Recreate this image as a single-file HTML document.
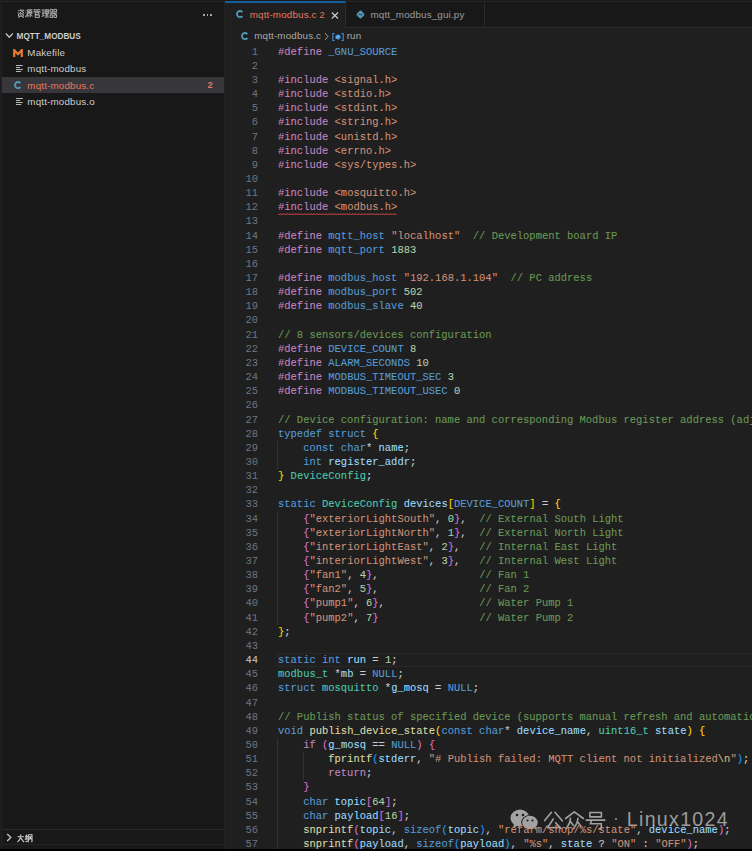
<!DOCTYPE html>
<html><head><meta charset="utf-8">
<style>
*{margin:0;padding:0;box-sizing:border-box}
html,body{width:752px;height:851px;overflow:hidden;background:#1b1b1b}
body{position:relative;font-family:"Liberation Sans",sans-serif}
.abs{position:absolute}
#topb{left:0;top:1px;width:752px;height:1px;background:#242424}
#leftb{left:1px;top:1px;width:1px;height:848px;background:#232323}
#side{left:2px;top:2px;width:222px;height:847px;background:#181818}
#ed{left:225px;top:28px;width:527px;height:821px;background:#1f1f1f}
#sideR{left:224px;top:2px;width:1px;height:847px;background:#222222}
.ui{position:absolute;color:#cccccc;font-size:10px;white-space:pre;line-height:16px;letter-spacing:0.17px}
#tabs{left:225px;top:2px;width:527px;height:26px;background:#181818;border-bottom:1px solid #2b2b2b}
#tab1{left:225px;top:1px;width:121px;height:27px;background:#1f1f1f;border-top:2px solid #145f9c;border-right:1px solid #2b2b2b}
#tab2r{left:484px;top:2px;width:1px;height:25px;background:#2b2b2b}
#code{left:225px;top:0;width:527px;height:851px;overflow:hidden}
.ln{position:absolute;left:0;width:33px;transform:scaleY(1.06);transform-origin:0 9.9px;text-align:right;color:#6e7681;font-family:"Liberation Mono",monospace;font-size:10.47px;line-height:14.15px;white-space:pre}
.ln.act{color:#cccccc}
.cl{position:absolute;left:53px;color:#cccccc;-webkit-text-stroke:0.08px currentColor;transform:scaleY(1.08);transform-origin:0 9.9px;font-family:"Liberation Mono",monospace;font-size:10.47px;line-height:14.15px;white-space:pre}
.k{color:#569cd6}.p{color:#c586c0}.s{color:#ce9178}.n{color:#b5cea8}.c{color:#6a9955}.t{color:#4ec9b0}.v{color:#9cdcfe}.f{color:#dcdcaa}.b1{color:#ffd700}.b2{color:#da70d6}.b3{color:#179fff}.e{color:#d7ba7d}
#bottom{left:0;top:849px;width:752px;height:2px;background:#000}
</style></head><body>
<div class="abs" id="side"></div>
<div class="abs" id="ed"></div>
<div class="abs" id="topb"></div>
<div class="abs" id="leftb"></div>
<div class="abs" id="sideR"></div>
<div class="abs" id="tabs"></div>
<div class="abs" id="tab1"></div>
<div class="abs" id="tab2r"></div>

<svg class="abs" style="left:16.60px;top:9.40px;overflow:visible" width="42.7" height="10.6" viewBox="0 0 44.48 11.08"><g fill="none" stroke="#bdbdbd" stroke-width="0.95"><path transform="translate(0.00 0)" d="M0.8 1L1.6 1.8M0.6 4L1.8 3M3.5 0.4L2.8 2M3 1.3H7.2L6.6 2.4M5 1.5L3.2 4.2M5 2.5L7.4 4.2M1.5 5H6.5V7.5H1.5ZM4 5.5V7M3 7.6L1 9M5 7.6L7.2 9"/><path transform="translate(8.48 0)" d="M0.6 1L1.4 1.8M0.4 3.5L1.4 4.2M0.4 8.5L1.6 5.8M2.6 0.8H7.6M2.6 0.8V5L2 8.6M3.6 2.2H7V5.2H3.6ZM3.6 3.7H7M5.3 5.2V8.4L4.6 8.6M4 6.3L3.2 7.8M6.6 6.3L7.4 7.8M5.3 0.8L5 2.2"/><path transform="translate(16.96 0)" d="M1.5 0L0.5 1.6M1.2 0.8H3.4M5 0L4 1.6M4.7 0.8H7.4M4 1.6V2.2M0.8 3.6V2.4H7.2V3.6M2 3.5V9M2 3.5H6V5.5H2M2 6.3H6.4V8.8H2"/><path transform="translate(25.44 0)" d="M0.4 1H3M0.4 4.4H3M1.7 1V7.4M0.2 7.8L3.2 6.8M3.8 0.8H7.6V5H3.8ZM3.8 2.9H7.6M5.7 0.8V8.3M4 6.4H7.4M3.4 8.4H7.8"/><path transform="translate(33.92 0)" d="M0.6 0.4H3.4V3H0.6ZM4.6 0.4H7.4V3H4.6ZM0.2 4.4H7.8M4 3.2L1 6M4 4.4L7.4 6M6.6 3.2L7 3.6M0.6 6.2H3.4V8.8H0.6ZM4.6 6.2H7.4V8.8H4.6Z"/></g></svg>
<div class="abs" style="left:203px;top:14.2px;width:1.5px;height:1.5px;background:#a8a8a8"></div>
<div class="abs" style="left:206.7px;top:14.2px;width:1.5px;height:1.5px;background:#a8a8a8"></div>
<div class="abs" style="left:210.4px;top:14.2px;width:1.5px;height:1.5px;background:#a8a8a8"></div>
<svg class="abs" style="left:5px;top:32px" width="9" height="7" viewBox="0 0 9 7"><path d="M0.8 1.5 L4.3 5.2 L7.8 1.5" fill="none" stroke="#c5c5c5" stroke-width="1.3"/></svg>
<div class="ui" style="left:16.6px;top:28.7px;font-size:8.2px;font-weight:bold;color:#cccccc;letter-spacing:0">MQTT_MODBUS</div>
<svg class="abs" style="left:13.3px;top:48.6px" width="10" height="8" viewBox="0 0 10 8"><path d="M1.2 8V1L5 5.2L8.8 1V8" fill="none" stroke="#e37933" stroke-width="2.2" stroke-linejoin="miter"/></svg>
<div class="ui" style="left:27.3px;top:44.8px;font-size:9.8px">Makefile</div>
<svg class="abs" style="left:15.8px;top:65px" width="8" height="8" viewBox="0 0 8 8"><path d="M0 0.5h6.8M0 2.5h4.2M0 4.5h6.8M0 6.5h5.2" stroke="#b8b8b8" stroke-width="1"/></svg>
<div class="ui" style="left:27.3px;top:61.2px;font-size:9.8px">mqtt-modbus</div>
<div class="abs" style="left:2px;top:77.2px;width:222px;height:15.6px;background:#36363b"></div>
<svg class="abs" style="left:14.2px;top:81px" width="8" height="9" viewBox="0 0 8 9"><path d="M6.4 2.1A3.1 3.1 0 1 0 6.4 6.1" fill="none" stroke="#519aba" stroke-width="1.8"/></svg>
<div class="ui" style="left:27.3px;top:77.6px;font-size:9.8px;color:#e8775f">mqtt-modbus.c</div>
<div class="ui" style="left:207.6px;top:77.3px;font-size:9.2px;font-weight:bold;color:#e8775f">2</div>
<svg class="abs" style="left:15.8px;top:98px" width="8" height="8" viewBox="0 0 8 8"><path d="M0 0.5h6.8M0 2.5h4.2M0 4.5h6.8M0 6.5h5.2" stroke="#b8b8b8" stroke-width="1"/></svg>
<div class="ui" style="left:27.3px;top:94.2px;font-size:9.8px">mqtt-modbus.o</div>
<div class="abs" style="left:2px;top:829px;width:222px;height:1px;background:#2b2b2b"></div>
<svg class="abs" style="left:6px;top:833px" width="6" height="9" viewBox="0 0 6 9"><path d="M1.2 1 L4.8 4.5 L1.2 8" fill="none" stroke="#c5c5c5" stroke-width="1.3"/></svg>
<svg class="abs" style="left:16.70px;top:833.80px;overflow:visible" width="18.0" height="10.3" viewBox="0 0 19.57 11.17"><g fill="none" stroke="#cccccc" stroke-width="1.20"><path transform="translate(0.00 0)" d="M0.5 3H7.5M4 0.5V3Q3.5 6.5 0.5 8.8M4.2 4.5L7.5 8.8"/><path transform="translate(8.70 0)" d="M2 0.5L0.6 3L2.6 3.2M2.6 2.2L0.6 5.6L3 5.2M0.4 8.4L3 7.6M3.6 0.8V9M3.6 0.8H7.6V8.2L7 8.8M4.6 2.6L6.8 6M6.6 2.6L4.6 6"/></g></svg>
<div class="abs" style="left:2px;top:844px;width:222px;height:1px;background:#242424"></div>
<svg class="abs" style="left:236.3px;top:10.1px" width="8" height="9" viewBox="0 0 8 9"><path d="M6.4 2.1A3.1 3.1 0 1 0 6.4 6.1" fill="none" stroke="#519aba" stroke-width="1.8"/></svg>
<div class="ui" style="left:249.7px;top:7px;font-size:9.8px;color:#e8775f">mqtt-modbus.c</div><div class="ui" style="left:319.5px;top:7px;font-size:9.3px;color:#e8775f">2</div>
<svg class="abs" style="left:331px;top:12px" width="8" height="7" viewBox="0 0 8 7"><path d="M0.8 0.5 L7 6.5 M7 0.5 L0.8 6.5" stroke="#d0d0d0" stroke-width="1.1"/></svg>
<svg class="abs" style="left:356.2px;top:9.6px" width="9" height="9" viewBox="0 0 9 9"><g transform="rotate(45 4.5 4.5)"><rect x="1.3" y="1.3" width="6.4" height="6.4" rx="1.8" fill="#519aba"/></g><path d="M2.6 4.6Q3.6 3.6 4.5 4.5Q5.4 5.4 6.4 4.4" fill="none" stroke="#181818" stroke-width="0.9"/></svg>
<div class="ui" style="left:370.5px;top:7px;font-size:9.8px;color:#9d9d9d">mqtt_modbus_gui.py</div>
<svg class="abs" style="left:240.6px;top:31.8px" width="8" height="9" viewBox="0 0 8 9"><path d="M6.4 2.1A3.1 3.1 0 1 0 6.4 6.1" fill="none" stroke="#519aba" stroke-width="1.8"/></svg>
<div class="ui" style="left:254.2px;top:28px;font-size:9.8px;color:#a9a9a9">mqtt-modbus.c</div>
<svg class="abs" style="left:324px;top:32px" width="5" height="9" viewBox="0 0 5 9"><path d="M1 1 L4 4.5 L1 8" fill="none" stroke="#9a9a9a" stroke-width="1"/></svg>
<svg class="abs" style="left:332px;top:32.5px" width="12" height="8" viewBox="0 0 12 8"><path d="M2.6 0.5H0.8V7.5H2.6M9.4 0.5H11.2V7.5H9.4" fill="none" stroke="#3f8fd8" stroke-width="1.1"/><path d="M6 1.3L8.6 2.7V5.4L6 6.8L3.4 5.4V2.7Z" fill="#3f8fd8"/><path d="M4.2 4.6L7.6 3.0" stroke="#9fd0ff" stroke-width="0.9"/></svg>
<div class="ui" style="left:346.7px;top:28px;font-size:9.8px;color:#a9a9a9">run</div>

<svg class="abs" style="left:508px;top:807px" width="32" height="24" viewBox="0 0 32 24">
<ellipse cx="12" cy="11" rx="9.5" ry="8.6" fill="#a3a3a3"/>
<path d="M6 17 L5 21 L10 18.5Z" fill="#a3a3a3"/>
<ellipse cx="22" cy="15.5" rx="8.8" ry="7.6" fill="#1f1f1f"/>
<ellipse cx="22" cy="15.5" rx="7.8" ry="6.8" fill="#a3a3a3"/>
<path d="M26 21 L28.5 23.5 L27.5 20Z" fill="#a3a3a3"/>
<circle cx="9" cy="8" r="1.3" fill="#1f1f1f"/><circle cx="15" cy="8" r="1.3" fill="#1f1f1f"/>
<circle cx="19.5" cy="13.5" r="1.1" fill="#1f1f1f"/><circle cx="24.5" cy="13.5" r="1.1" fill="#1f1f1f"/>
</svg>
<svg class="abs" style="left:540px;top:805px" width="70" height="28" viewBox="0 0 70 28"><path d="M11.4 7.3L4.7 15.6M14.9 7.3L22.3 15.8M13.2 14.0L7.6 22.8L20.2 22.2M15.7 17.9L20.9 23.4M25.6 13.5L34.3 6.8L43.4 13.5M30.5 13.2L29.5 18.0L26.5 23.4M30.5 16.4L33.2 20.3M38.0 13.2L37.0 18.0L33.5 23.8M38.3 17.4L40.9 21.5M49.9 7.5L61.4 7.5L61.4 11.9L49.9 11.9ZM46.2 15.1L64.9 15.1M51.3 15.8L50.4 18.8L61.4 18.8L61.2 23.4L59.0 24.1" fill="none" stroke="#a2a2a2" stroke-width="1.6" stroke-linecap="round" stroke-linejoin="round"/></svg><div class="abs" style="left:614.5px;top:817.5px;width:2.2px;height:2.2px;border-radius:1px;background:#9c9c9c"></div><div class="ui" style="left:626.8px;top:806px;font-size:19.6px;line-height:26px;color:#9c9c9c;letter-spacing:1.3px">Linux1024</div>
<div class="abs" id="code">
<div class="abs" style="left:52.40px;top:440.80px;width:1px;height:28.30px;background:#313131"></div>
<div class="abs" style="left:52.40px;top:511.55px;width:1px;height:113.20px;background:#313131"></div>
<div class="abs" style="left:52.40px;top:737.95px;width:1px;height:113.20px;background:#313131"></div>
<div class="abs" style="left:77.53px;top:752.10px;width:1px;height:28.30px;background:#313131"></div>
<div class="abs" style="left:53.00px;top:653.05px;width:600px;height:14.15px;border:1px solid #282828;border-right:none"></div>
<div class="ln" style="top:44.60px">1</div>
<div class="cl" style="top:44.60px"><span class="p">#define</span> <span class="k">_GNU_SOURCE</span></div>
<div class="ln" style="top:58.75px">2</div>
<div class="ln" style="top:72.90px">3</div>
<div class="cl" style="top:72.90px"><span class="p">#include</span> <span class="s">&lt;signal.h&gt;</span></div>
<div class="ln" style="top:87.05px">4</div>
<div class="cl" style="top:87.05px"><span class="p">#include</span> <span class="s">&lt;stdio.h&gt;</span></div>
<div class="ln" style="top:101.20px">5</div>
<div class="cl" style="top:101.20px"><span class="p">#include</span> <span class="s">&lt;stdint.h&gt;</span></div>
<div class="ln" style="top:115.35px">6</div>
<div class="cl" style="top:115.35px"><span class="p">#include</span> <span class="s">&lt;string.h&gt;</span></div>
<div class="ln" style="top:129.50px">7</div>
<div class="cl" style="top:129.50px"><span class="p">#include</span> <span class="s">&lt;unistd.h&gt;</span></div>
<div class="ln" style="top:143.65px">8</div>
<div class="cl" style="top:143.65px"><span class="p">#include</span> <span class="s">&lt;errno.h&gt;</span></div>
<div class="ln" style="top:157.80px">9</div>
<div class="cl" style="top:157.80px"><span class="p">#include</span> <span class="s">&lt;sys/types.h&gt;</span></div>
<div class="ln" style="top:171.95px">10</div>
<div class="ln" style="top:186.10px">11</div>
<div class="cl" style="top:186.10px"><span class="p">#include</span> <span class="s">&lt;mosquitto.h&gt;</span></div>
<div class="ln" style="top:200.25px">12</div>
<div class="cl" style="top:200.25px"><span class="p">#include</span> <span class="s">&lt;modbus.h&gt;</span></div>
<div class="ln" style="top:214.40px">13</div>
<div class="ln" style="top:228.55px">14</div>
<div class="cl" style="top:228.55px"><span class="p">#define</span> <span class="k">mqtt_host</span> <span class="s">&quot;localhost&quot;</span>  <span class="c">// Development board IP</span></div>
<div class="ln" style="top:242.70px">15</div>
<div class="cl" style="top:242.70px"><span class="p">#define</span> <span class="k">mqtt_port</span> <span class="n">1883</span></div>
<div class="ln" style="top:256.85px">16</div>
<div class="ln" style="top:271.00px">17</div>
<div class="cl" style="top:271.00px"><span class="p">#define</span> <span class="k">modbus_host</span> <span class="s">&quot;192.168.1.104&quot;</span>  <span class="c">// PC address</span></div>
<div class="ln" style="top:285.15px">18</div>
<div class="cl" style="top:285.15px"><span class="p">#define</span> <span class="k">modbus_port</span> <span class="n">502</span></div>
<div class="ln" style="top:299.30px">19</div>
<div class="cl" style="top:299.30px"><span class="p">#define</span> <span class="k">modbus_slave</span> <span class="n">40</span></div>
<div class="ln" style="top:313.45px">20</div>
<div class="ln" style="top:327.60px">21</div>
<div class="cl" style="top:327.60px"><span class="c">// 8 sensors/devices configuration</span></div>
<div class="ln" style="top:341.75px">22</div>
<div class="cl" style="top:341.75px"><span class="p">#define</span> <span class="k">DEVICE_COUNT</span> <span class="n">8</span></div>
<div class="ln" style="top:355.90px">23</div>
<div class="cl" style="top:355.90px"><span class="p">#define</span> <span class="k">ALARM_SECONDS</span> <span class="n">10</span></div>
<div class="ln" style="top:370.05px">24</div>
<div class="cl" style="top:370.05px"><span class="p">#define</span> <span class="k">MODBUS_TIMEOUT_SEC</span> <span class="n">3</span></div>
<div class="ln" style="top:384.20px">25</div>
<div class="cl" style="top:384.20px"><span class="p">#define</span> <span class="k">MODBUS_TIMEOUT_USEC</span> <span class="n">0</span></div>
<div class="ln" style="top:398.35px">26</div>
<div class="ln" style="top:412.50px">27</div>
<div class="cl" style="top:412.50px"><span class="c">// Device configuration: name and corresponding Modbus register address (adjustable)</span></div>
<div class="ln" style="top:426.65px">28</div>
<div class="cl" style="top:426.65px"><span class="k">typedef</span> <span class="k">struct</span> <span class="b1">{</span></div>
<div class="ln" style="top:440.80px">29</div>
<div class="cl" style="top:440.80px">    <span class="k">const</span> <span class="k">char</span>* <span class="v">name</span>;</div>
<div class="ln" style="top:454.95px">30</div>
<div class="cl" style="top:454.95px">    <span class="k">int</span> <span class="v">register_addr</span>;</div>
<div class="ln" style="top:469.10px">31</div>
<div class="cl" style="top:469.10px"><span class="b1">}</span> <span class="t">DeviceConfig</span>;</div>
<div class="ln" style="top:483.25px">32</div>
<div class="ln" style="top:497.40px">33</div>
<div class="cl" style="top:497.40px"><span class="k">static</span> <span class="t">DeviceConfig</span> <span class="v">devices</span><span class="b1">[</span><span class="k">DEVICE_COUNT</span><span class="b1">]</span> = <span class="b1">{</span></div>
<div class="ln" style="top:511.55px">34</div>
<div class="cl" style="top:511.55px">    <span class="b2">{</span><span class="s">&quot;exteriorLightSouth&quot;</span>, <span class="n">0</span><span class="b2">}</span>,  <span class="c">// External South Light</span></div>
<div class="ln" style="top:525.70px">35</div>
<div class="cl" style="top:525.70px">    <span class="b2">{</span><span class="s">&quot;exteriorLightNorth&quot;</span>, <span class="n">1</span><span class="b2">}</span>,  <span class="c">// External North Light</span></div>
<div class="ln" style="top:539.85px">36</div>
<div class="cl" style="top:539.85px">    <span class="b2">{</span><span class="s">&quot;interiorLightEast&quot;</span>, <span class="n">2</span><span class="b2">}</span>,   <span class="c">// Internal East Light</span></div>
<div class="ln" style="top:554.00px">37</div>
<div class="cl" style="top:554.00px">    <span class="b2">{</span><span class="s">&quot;interiorLightWest&quot;</span>, <span class="n">3</span><span class="b2">}</span>,   <span class="c">// Internal West Light</span></div>
<div class="ln" style="top:568.15px">38</div>
<div class="cl" style="top:568.15px">    <span class="b2">{</span><span class="s">&quot;fan1&quot;</span>, <span class="n">4</span><span class="b2">}</span>,                <span class="c">// Fan 1</span></div>
<div class="ln" style="top:582.30px">39</div>
<div class="cl" style="top:582.30px">    <span class="b2">{</span><span class="s">&quot;fan2&quot;</span>, <span class="n">5</span><span class="b2">}</span>,                <span class="c">// Fan 2</span></div>
<div class="ln" style="top:596.45px">40</div>
<div class="cl" style="top:596.45px">    <span class="b2">{</span><span class="s">&quot;pump1&quot;</span>, <span class="n">6</span><span class="b2">}</span>,               <span class="c">// Water Pump 1</span></div>
<div class="ln" style="top:610.60px">41</div>
<div class="cl" style="top:610.60px">    <span class="b2">{</span><span class="s">&quot;pump2&quot;</span>, <span class="n">7</span><span class="b2">}</span>                <span class="c">// Water Pump 2</span></div>
<div class="ln" style="top:624.75px">42</div>
<div class="cl" style="top:624.75px"><span class="b1">}</span>;</div>
<div class="ln" style="top:638.90px">43</div>
<div class="ln act" style="top:653.05px">44</div>
<div class="cl" style="top:653.05px"><span class="k">static</span> <span class="k">int</span> <span class="v">run</span> = <span class="n">1</span>;</div>
<div class="ln" style="top:667.20px">45</div>
<div class="cl" style="top:667.20px"><span class="t">modbus_t</span> *<span class="v">mb</span> = <span class="k">NULL</span>;</div>
<div class="ln" style="top:681.35px">46</div>
<div class="cl" style="top:681.35px"><span class="k">struct</span> <span class="t">mosquitto</span> *<span class="v">g_mosq</span> = <span class="k">NULL</span>;</div>
<div class="ln" style="top:695.50px">47</div>
<div class="ln" style="top:709.65px">48</div>
<div class="cl" style="top:709.65px"><span class="c">// Publish status of specified device (supports manual refresh and automatic publish)</span></div>
<div class="ln" style="top:723.80px">49</div>
<div class="cl" style="top:723.80px"><span class="k">void</span> <span class="f">publish_device_state</span><span class="b1">(</span><span class="k">const</span> <span class="k">char</span>* <span class="v">device_name</span>, <span class="t">uint16_t</span> <span class="v">state</span><span class="b1">)</span> <span class="b1">{</span></div>
<div class="ln" style="top:737.95px">50</div>
<div class="cl" style="top:737.95px">    <span class="p">if</span> <span class="b2">(</span><span class="v">g_mosq</span> == <span class="k">NULL</span><span class="b2">)</span> <span class="b2">{</span></div>
<div class="ln" style="top:752.10px">51</div>
<div class="cl" style="top:752.10px">        <span class="f">fprintf</span><span class="b3">(</span><span class="v">stderr</span>, <span class="s">&quot;# Publish failed: MQTT client not initialized</span><span class="e">\n</span><span class="s">&quot;</span><span class="b3">)</span>;</div>
<div class="ln" style="top:766.25px">52</div>
<div class="cl" style="top:766.25px">        <span class="p">return</span>;</div>
<div class="ln" style="top:780.40px">53</div>
<div class="cl" style="top:780.40px">    <span class="b2">}</span></div>
<div class="ln" style="top:794.55px">54</div>
<div class="cl" style="top:794.55px">    <span class="k">char</span> <span class="v">topic</span><span class="b2">[</span><span class="n">64</span><span class="b2">]</span>;</div>
<div class="ln" style="top:808.70px">55</div>
<div class="cl" style="top:808.70px">    <span class="k">char</span> <span class="v">payload</span><span class="b2">[</span><span class="n">16</span><span class="b2">]</span>;</div>
<div class="ln" style="top:822.85px">56</div>
<div class="cl" style="top:822.85px">    <span class="f">snprintf</span><span class="b2">(</span><span class="v">topic</span>, <span class="k">sizeof</span><span class="b3">(</span><span class="v">topic</span><span class="b3">)</span>, <span class="s">&quot;refarm/shop/%s/state&quot;</span>, <span class="v">device_name</span><span class="b2">)</span>;</div>
<div class="ln" style="top:837.00px">57</div>
<div class="cl" style="top:837.00px">    <span class="f">snprintf</span><span class="b2">(</span><span class="v">payload</span>, <span class="k">sizeof</span><span class="b3">(</span><span class="v">payload</span><span class="b3">)</span>, <span class="s">&quot;%s&quot;</span>, <span class="v">state</span> ? <span class="s">&quot;ON&quot;</span> : <span class="s">&quot;OFF&quot;</span><span class="b2">)</span>;</div>
<svg class="abs" style="left:52.5px;top:212.70px" width="120" height="3"><path d="M0.0 0.5 L1.5 2.0 L3.0 0.5 L4.5 2.0 L6.0 0.5 L7.5 2.0 L9.0 0.5 L10.5 2.0 L12.0 0.5 L13.5 2.0 L15.0 0.5 L16.5 2.0 L18.0 0.5 L19.5 2.0 L21.0 0.5 L22.5 2.0 L24.0 0.5 L25.5 2.0 L27.0 0.5 L28.5 2.0 L30.0 0.5 L31.5 2.0 L33.0 0.5 L34.5 2.0 L36.0 0.5 L37.5 2.0 L39.0 0.5 L40.5 2.0 L42.0 0.5 L43.5 2.0 L45.0 0.5 L46.5 2.0 L48.0 0.5 L49.5 2.0 L51.0 0.5 L52.5 2.0 L54.0 0.5 L55.5 2.0 L57.0 0.5 L58.5 2.0 L60.0 0.5 L61.5 2.0 L63.0 0.5 L64.5 2.0 L66.0 0.5 L67.5 2.0 L69.0 0.5 L70.5 2.0 L72.0 0.5 L73.5 2.0 L75.0 0.5 L76.5 2.0 L78.0 0.5 L79.5 2.0 L81.0 0.5 L82.5 2.0 L84.0 0.5 L85.5 2.0 L87.0 0.5 L88.5 2.0 L90.0 0.5 L91.5 2.0 L93.0 0.5 L94.5 2.0 L96.0 0.5 L97.5 2.0 L99.0 0.5 L100.5 2.0 L102.0 0.5 L103.5 2.0 L105.0 0.5 L106.5 2.0 L108.0 0.5 L109.5 2.0 L111.0 0.5 L112.5 2.0 L114.0 0.5 L115.5 2.0 L117.0 0.5 L118.5 2.0" fill="none" stroke="#f14c4c" stroke-width="0.9"/></svg>
</div>

<div class="abs" id="bottom"></div>
</body></html>
